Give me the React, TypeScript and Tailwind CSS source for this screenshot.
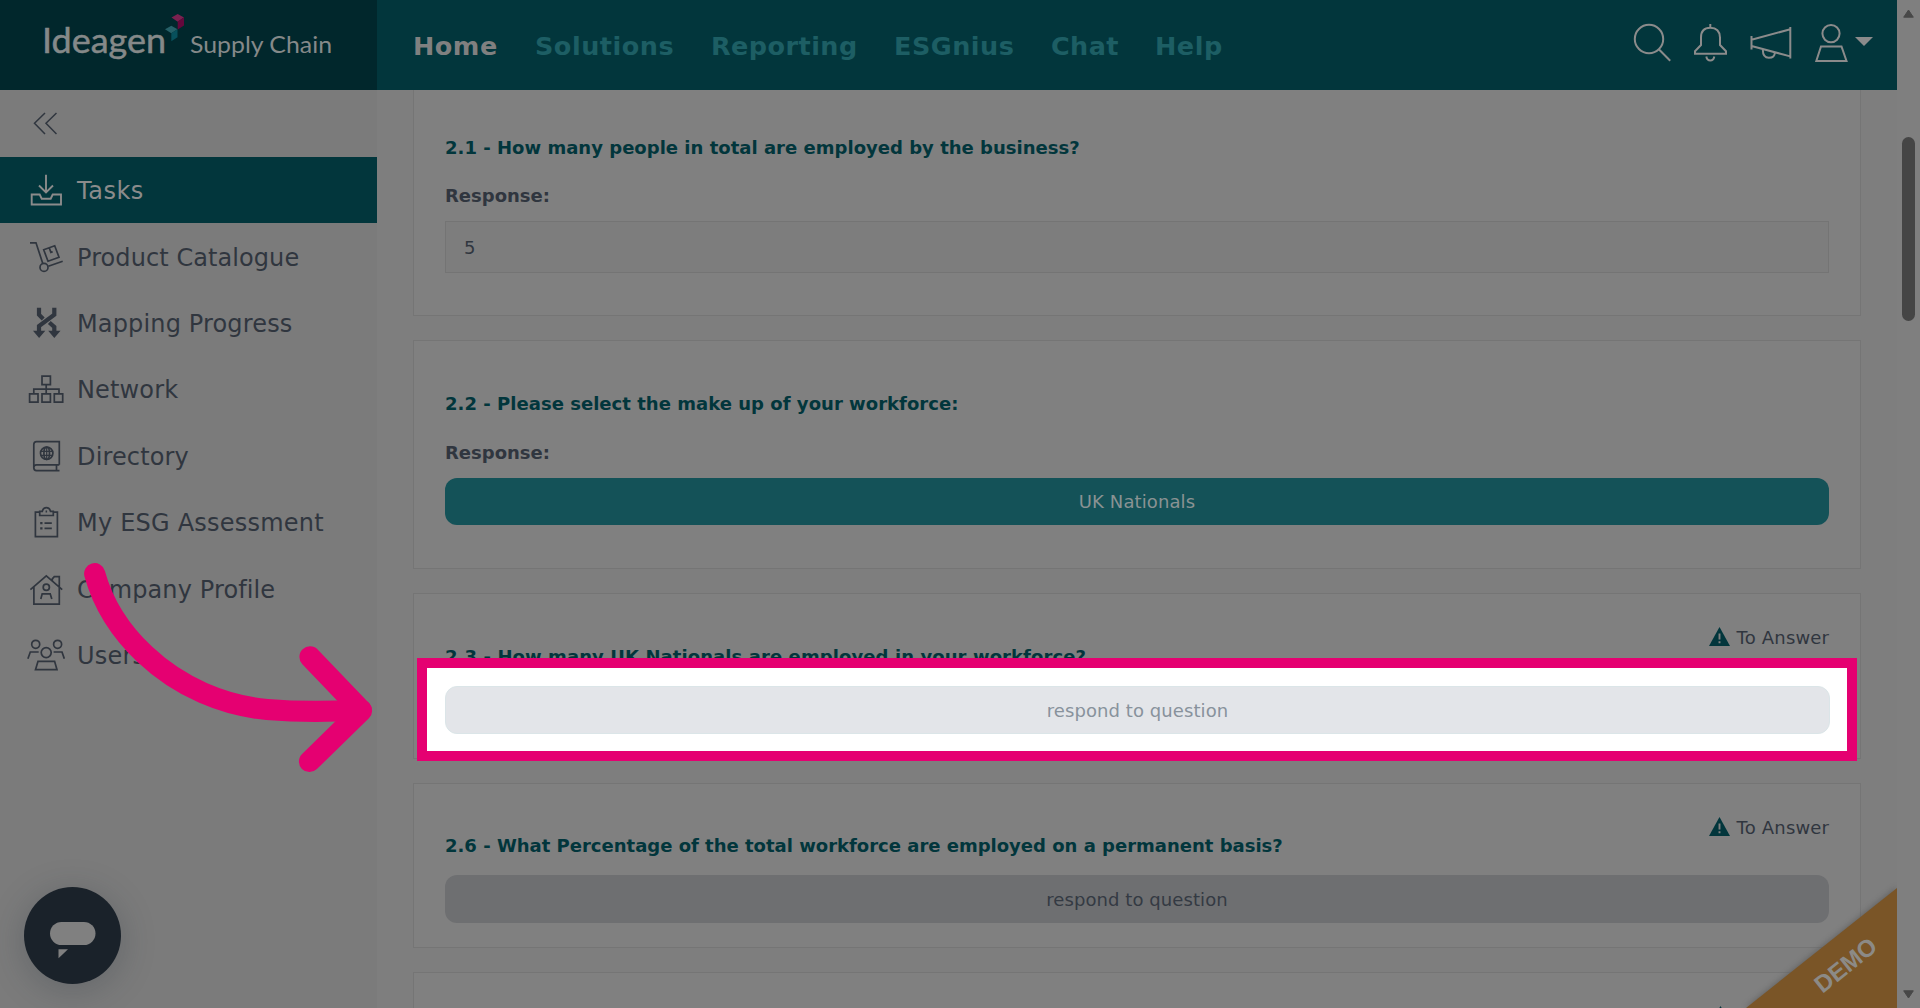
import type { ReactNode } from "react";

const navItems = [
  { label: "Home", cls: "w-[122px] tracking-[0.5px] text-[#808080]" },
  { label: "Solutions", cls: "w-[176px] tracking-[0.5px]" },
  { label: "Reporting", cls: "w-[183px] tracking-[0.45px]" },
  { label: "ESGnius", cls: "w-[157px] tracking-[0.5px]" },
  { label: "Chat", cls: "w-[104px] tracking-[0.4px]" },
  { label: "Help", cls: "w-[80px] tracking-[0.5px]" },
];

function Icon({ children }: { children: ReactNode }) {
  return (
    <svg className="mr-3 h-8 w-[38px] shrink-0" viewBox="0 0 38 32" fill="none" stroke="currentColor" strokeWidth="1.7">
      {children}
    </svg>
  );
}

const sideItems: { label: string; icon: ReactNode; cls: string }[] = [
  {
    label: "Tasks",
    cls: "tracking-[0.5px]",
    icon: <path d="M19 .7V19M12 11.5l7 7 7-7M4.7 20.5h8l2 4.2h9l2-4.2h8.3v10H4.7z" strokeWidth="1.9" />,
  },
  {
    label: "Product Catalogue",
    cls: "tracking-[0.08px]",
    icon: (
      <>
        <path d="M3 1.8h6l6.7 20.4M21.3 25.2l14.4-5M16.7 8.8l11-4 4.3 11.4-11 4zM22.4 7.2l1.5 4.2 1.8-.7" />
        <circle cx="17" cy="26.4" r="4" />
      </>
    ),
  },
  {
    label: "Mapping Progress",
    cls: "tracking-[0.15px]",
    icon: (
      <>
        <path d="M12 .8v6.9l4.2 4.2M27.3.8v6.9L12 19v6M22.3 15.5l5 4.5v5" strokeWidth="4.2" />
        <path d="M6 23.7h12.3l-6.2 7.2zM21.2 23.7h12.3l-6.2 7.2z" fill="currentColor" stroke="none" />
      </>
    ),
  },
  {
    label: "Network",
    cls: "tracking-[0.15px]",
    icon: (
      <path d="M15 3.2h8.4v8.4H15zM19.2 11.6v9M6.8 20.6v-4.4H32v4.4M2.6 20.8H11v8.3H2.6zM15 20.8h8.4v8.3H15zM27.3 20.8h8.4v8.3h-8.4z" />
    ),
  },
  {
    label: "Directory",
    cls: "tracking-[0.15px]",
    icon: (
      <>
        <path d="M32.3 24.8V1.7H9.5Q6.8 1.7 6.8 4.5v23.3q0 2.8 2.7 2.8h23M32.3 24.8H9.5q-2.7 0-2.7 3M29.5 24.8v5.8" />
        <circle cx="19.7" cy="13.3" r="6.2" />
        <ellipse cx="19.7" cy="13.3" rx="2.8" ry="6.2" />
        <path d="M19.7 7v12.6M14 11.3h11.4M14 15.4h11.4" strokeWidth="1.2" />
      </>
    ),
  },
  {
    label: "My ESG Assessment",
    cls: "tracking-[0.22px]",
    icon: (
      <>
        <path d="M12.5 6.2H8.4v24.5h22V6.2h-4M12.7 9.5V5.3h2.6q1-3.7 4.1-3.7t4.1 3.7h2.8v4.2zM17.5 17.1h7.3M17.5 22.4h7.3" />
        <path d="M13.2 17.1h2.3M13.2 22.4h2.3M18.6 5.5h1.5" strokeWidth="2.2" />
      </>
    ),
  },
  {
    label: "Company Profile",
    cls: "tracking-[0.12px]",
    icon: (
      <>
        <path d="M3.4 16.6L19.3 2.8l15.9 13.8M6.9 13.6v17.6h25.4V3.7h-5l-2 2.2v2M13.8 26l1.4-5.2h8l1.6 5.2" />
        <circle cx="19.3" cy="14.2" r="3.1" />
      </>
    ),
  },
  {
    label: "Users",
    cls: "tracking-[0.2px]",
    icon: (
      <>
        <circle cx="8.7" cy="5.3" r="4" />
        <circle cx="30.6" cy="5.3" r="4" />
        <circle cx="19.2" cy="13.6" r="5" />
        <path d="M.9 19.7L3.3 13h8.4M26.6 13H35l2.3 6.7M11 22.3h16.6l2.4 8.4H8.5z" />
      </>
    ),
  },
];

function WarningIcon() {
  return (
    <svg className="mr-[7px] mb-1 h-[19px] w-[21px]" viewBox="0 0 21 19">
      <path d="M10.5 0L21 19H0z" fill="#02363c" />
      <path d="M10.5 6.5v6M10.5 14.3v2" stroke="#808080" strokeWidth="1.9" />
    </svg>
  );
}

function PendingCard({
  title,
  cls,
  titleCls,
  children,
}: {
  title: string;
  cls: string;
  titleCls: string;
  children?: ReactNode;
}) {
  return (
    <section className={cls}>
      <div className="flex h-[18px] items-center justify-end text-[18px] leading-[18px]">
        <WarningIcon />
        <span className="-mr-[0.2px] tracking-[0.18px]">To Answer</span>
      </div>
      <h3 className={titleCls}>{title}</h3>
      {children}
    </section>
  );
}

function Header() {
  return (
    <header className="flex h-[90px] shrink-0 bg-[#02363c]">
      <div className="h-full w-[377px] bg-[#01272c]">
        <svg className="h-[90px] w-[377px]" viewBox="0 0 377 90" fill="#858989" fontFamily="Lato, sans-serif">
          <text x="42" y="52.5" fontSize="34" textLength="124" lengthAdjust="spacingAndGlyphs" stroke="#858989" strokeWidth="0.5">Ideagen</text>
          <text x="190" y="52.5" fontSize="24" textLength="142" lengthAdjust="spacingAndGlyphs">Supply Chain</text>
          <path d="M171.5 17.5l6.2-3.4 6.3 3.4-6.3 4.2z" fill="#7b2150" />
          <path d="M177.7 21.5l6.3-4v8l-6.3 4z" fill="#64083c" />
          <path d="M165 29.3l6.3-3.6 6.2 3.6-6.2 4z" fill="#266068" />
          <path d="M171.3 33.3l6.2-4v8l-6.2 4z" fill="#07505c" />
        </svg>
      </div>
      <nav className="flex flex-1 items-center pt-[2px] pl-9 text-[25.5px] font-bold text-[#1d5e64]">
        {navItems.map((n) => (
          <a key={n.label} className={n.cls}>{n.label}</a>
        ))}
      </nav>
      <svg className="h-[90px] w-[264px]" viewBox="1633 0 264 90" fill="none" stroke="#8b8b8b" strokeWidth="2">
        <circle cx="1649" cy="39" r="14.2" />
        <path d="M1658.8 49.3l11.4 11.4" />
        <path d="M1710.3 24v3.5M1701 45V37.5q0-9.7 9.3-9.7t9.7 9.7V45l6 6.2v2.5h-31v-2.5zM1706.3 56.5q.7 4 4 4t4-4" />
        <path d="M1751.5 36v13.5M1790.3 27v31.5M1751.5 39.7l38.8-10.4M1751.5 46l38.8 10.4M1762.8 49.5q0 8.3 6 8.3t6-5.3" />
        <circle cx="1831" cy="33.6" r="8.6" />
        <path d="M1821 46.4h20.5l5 14.6h-30.2z" />
        <path d="M1855 37h18l-9 9z" fill="#8b8b8b" stroke="none" />
      </svg>
    </header>
  );
}

export default function App() {
  return (
    <div
      className="relative flex h-[1008px] w-[1920px] overflow-hidden bg-[#7e7e7e] text-[#30363f]"
      style={{ fontFamily: '"DejaVu Sans", Verdana, sans-serif' }}
    >
      <div className="flex w-[1897px] flex-col">
        <Header />
        <div className="flex min-h-0 flex-1">
          <aside className="w-[377px] shrink-0 bg-[#7b7b7b]">
            <div className="flex h-[67px] items-center pb-px pl-[33px]">
              <svg className="h-6 w-6" viewBox="0 0 24 24" fill="none" stroke="currentColor" strokeWidth="1.5">
                <path d="M12 2L1.5 12.3 12 23M23.5 2L13 12.3 23.5 23" />
              </svg>
            </div>
            {sideItems.map((s, i) => (
              <div
                key={s.label}
                className={
                  i === 0
                    ? "flex h-[66.4px] items-center bg-[#02363c] pl-[27px] text-[24px] text-[#8b8b8b]"
                    : "flex h-[66.4px] items-center pl-[27px] text-[24px]"
                }
              >
                <Icon>{s.icon}</Icon>
                <span className="pt-[2px] whitespace-nowrap">
                  <span className={s.cls}>{s.label}</span>
                </span>
              </div>
            ))}
          </aside>
          <main className="flex flex-1 flex-col overflow-hidden pr-9 pl-9">
            <section className="mb-6 h-[226px] shrink-0 border border-t-0 border-[#757575] bg-[#808080] px-[31px] pt-[46px]">
              <h3 className="text-[18px] leading-6 font-bold tracking-[0.02px] text-[#02363c]">
                2.1 - How many people in total are employed by the business?
              </h3>
              <p className="mt-[24px] text-[18px] leading-6 font-bold">Response:</p>
              <div className="mt-[13px] flex h-[52px] items-center border border-[#747474] bg-[#7d7d7d] px-[18px] text-[18px]">5</div>
            </section>
            <section className="mb-6 h-[229px] shrink-0 border border-[#757575] bg-[#808080] px-[31px] pt-[51px]">
              <h3 className="text-[18px] leading-6 font-bold tracking-[0.03px] text-[#02363c]">
                2.2 - Please select the make up of your workforce:
              </h3>
              <p className="mt-[25px] text-[18px] leading-6 font-bold">Response:</p>
              <div className="mt-[13px] flex h-[47px] items-center justify-center rounded-xl bg-[#145258] text-[18px] tracking-[0.1px] text-[#8a9293]">
                UK Nationals
              </div>
            </section>
            <PendingCard
              title="2.3 - How many UK Nationals are employed in your workforce?"
              cls="mb-6 h-[166px] shrink-0 border border-[#757575] bg-[#808080] px-[31px] pt-[35px]"
              titleCls="mt-px text-[18px] leading-[18px] font-bold tracking-[0.09px] text-[#02363c]"
            />
            <PendingCard
              title="2.6 - What Percentage of the total workforce are employed on a permanent basis?"
              cls="mb-6 h-[165px] shrink-0 border border-[#757575] bg-[#808080] px-[31px] pt-[35px]"
              titleCls="text-[18px] leading-[18px] font-bold text-[#02363c]"
            >
              <div className="mt-[20px] flex h-12 items-center justify-center rounded-xl bg-[#6e6f71] text-[18px] tracking-[0.08px] text-[#343a43]">
                respond to question
              </div>
            </PendingCard>
            <section className="flex h-[166px] shrink-0 justify-end border border-[#757575] bg-[#808080] px-[31px] pt-[33px]">
              <div className="mr-[91px]">
                <WarningIcon />
              </div>
            </section>
          </main>
        </div>
      </div>
      <div className="flex w-[23px] flex-col items-center justify-between bg-[#7f7f7f] py-[9px]">
        <svg className="h-[9px] w-[11px]" viewBox="0 0 11 9"><path d="M5.5 1L10.3 8.2H.7z" fill="#484848" stroke="#484848" strokeLinejoin="round" /></svg>
        <div className="mt-[119px] mb-auto h-[184px] w-[13px] rounded-full bg-[#454545]" />
        <svg className="h-[9px] w-[11px]" viewBox="0 0 11 9"><path d="M5.5 8L10.3.8H.7z" fill="#484848" stroke="#484848" strokeLinejoin="round" /></svg>
      </div>

      <div className="absolute top-[658px] left-[417px] h-[103px] w-[1440px] border-[10px] border-[#e50071] bg-white px-[18px] pt-[18px]">
        <div className="flex h-12 w-[1385px] items-center justify-center rounded-xl border border-[#dbe5e8] bg-[#e3e5e9] text-[18px] tracking-[0.08px] text-[#88929c]">
          respond to question
        </div>
      </div>

      <svg className="absolute top-[540px] left-[60px] h-[260px] w-[330px]" viewBox="60 540 330 260" fill="none" stroke="#e50071" strokeWidth="21.2" strokeLinecap="round" strokeLinejoin="round">
        <path d="M94.7 573.7C103 604 121 632 145 654.5C180 687.5 224 705.5 267 709.5Q310 713 361 710" />
        <path d="M310 656.9l51.5 53.8-52 50.8" />
      </svg>

      <div className="absolute top-[887px] left-[24px] h-[97px] w-[97px] rounded-full bg-[#1a222a] shadow-[0_6px_34px_rgba(40,50,60,0.28)]">
        <svg className="h-full w-full" viewBox="0 0 97 97" fill="#808080">
          <rect x="26" y="35" width="45.5" height="23" rx="11.5" />
          <path d="M34.5 62.3H44l-9.5 9z" />
        </svg>
      </div>

      <svg className="absolute right-[23px] bottom-0 h-[126px] w-[160px]" viewBox="0 0 160 126">
        <path d="M160 5L8 126H160z" fill="#555" opacity=".7" style={{ filter: "blur(3px)" }} />
        <path d="M160 6L9 126H160z" fill="#7a5527" />
        <text x="109" y="92" fill="#8c8a86" fontSize="24" fontWeight="bold" fontFamily="Liberation Sans, Arial, sans-serif" textAnchor="middle" transform="rotate(-38.5 108 84)">
          DEMO
        </text>
      </svg>
    </div>
  );
}
